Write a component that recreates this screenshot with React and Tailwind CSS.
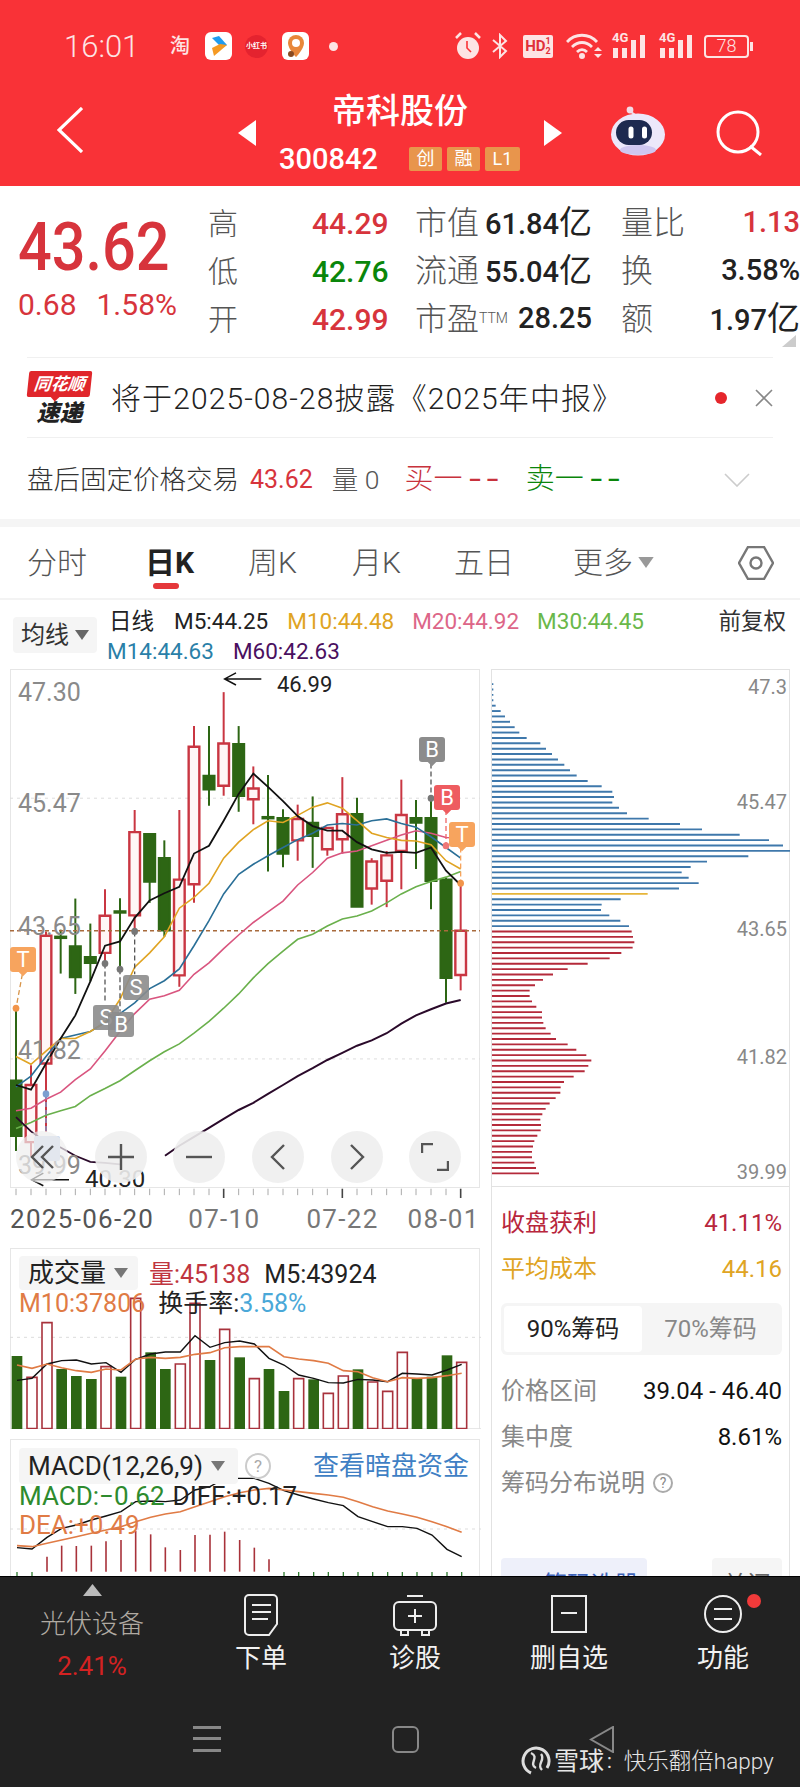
import React from "react";

const P = (a) => a.map((p) => p.join(",")).join(" ");
const xs = [48, 93, 138, 182, 226, 271, 315, 360, 404, 449, 493, 538, 582, 627, 671, 716, 760, 804, 849, 893, 938, 982, 1027, 1071, 1115, 1160, 1204, 1248, 1293, 1338, 1382];
const line = (ys) => ys.map((y, i) => [xs[i], y]);
const NS = { vectorEffect: "non-scaling-stroke" };

const candles = [
  [975, 1178, 1332, 1375, 1], [1135, 1190, 1350, 1390, 0], [760, 772, 1130, 1320, 0], [755, 775, 778, 878, 1],
  [668, 802, 888, 935, 1], [738, 832, 848, 900, 1], [642, 716, 820, 850, 0], [667, 704, 707, 870, 1],
  [420, 482, 715, 760, 0], [488, 488, 620, 680, 1], [505, 555, 757, 775, 1], [420, 615, 883, 915, 0],
  [185, 243, 628, 680, 0], [185, 325, 362, 408, 1], [90, 234, 352, 380, 0], [185, 236, 380, 425, 1],
  [298, 360, 390, 460, 0], [322, 440, 443, 592, 1], [418, 443, 542, 580, 1], [405, 445, 505, 562, 0],
  [382, 456, 492, 582, 1], [470, 470, 530, 548, 0], [328, 432, 502, 542, 0], [386, 432, 690, 690, 1],
  [555, 564, 640, 685, 0], [535, 547, 618, 692, 0], [335, 434, 535, 642, 0], [392, 443, 455, 585, 1],
  [385, 443, 618, 698, 1], [610, 615, 890, 960, 1], [625, 758, 882, 925, 0],
];
const m5 = [1190, 1203, 1130, 1060, 995, 900, 800, 788, 722, 673, 653, 635, 542, 520, 450, 375, 318, 355, 395, 437, 465, 478, 478, 510, 530, 540, 537, 540, 525, 590, 630];
const m10 = [1110, 1132, 1095, 1060, 1060, 1040, 1015, 950, 860, 820, 775, 695, 665, 625, 555, 510, 475, 450, 455, 435, 412, 400, 415, 450, 485, 497, 505, 507, 517, 562, 585];
const m14 = [1195, 1165, 1110, 1060, 1050, 1040, 1015, 990, 960, 920, 898, 865, 800, 730, 655, 600, 572, 548, 525, 503, 485, 462, 458, 462, 450, 445, 458, 468, 495, 525, 555];
const m20 = [1262, 1255, 1230, 1210, 1175, 1145, 1095, 1040, 990, 950, 940, 925, 880, 848, 808, 770, 735, 705, 675, 630, 595, 555, 540, 535, 520, 505, 490, 478, 485, 497, 498];
const m30 = [1312, 1295, 1275, 1262, 1250, 1220, 1200, 1178, 1150, 1122, 1097, 1075, 1045, 1012, 975, 935, 890, 850, 815, 782, 768, 745, 725, 717, 703, 680, 655, 635, 620, 608, 592];
const m60 = [[48, 1280], [93, 1320], [138, 1350], [182, 1365], [226, 1388], [271, 1405], [315, 1408], [360, 1412]];
const m60b = [[495, 1388], [538, 1360], [582, 1335], [627, 1310], [671, 1285], [716, 1260], [760, 1240], [804, 1215], [849, 1190], [893, 1165], [938, 1143], [982, 1120], [1027, 1100], [1071, 1080], [1115, 1065], [1160, 1045], [1204, 1018], [1248, 995], [1293, 978], [1338, 962], [1382, 952]];

const volBars = [[468, 1], [532, 0], [368, 0], [507, 1], [528, 1], [537, 1], [500, 0], [530, 1], [295, 0], [457, 1], [507, 1], [492, 0], [310, 0], [480, 1], [388, 0], [472, 1], [536, 0], [507, 1], [573, 1], [536, 0], [538, 1], [580, 0], [528, 0], [508, 1], [546, 0], [574, 0], [457, 0], [537, 1], [530, 1], [466, 1], [487, 0]];
const volK = [541, 535, 492, 482, 480, 492, 488, 517, 478, 462, 456, 456, 407, 442, 428, 423, 432, 475, 495, 525, 535, 548, 549, 538, 540, 545, 520, 522, 525, 510, 493];
const volO = [495, 505, 492, 503, 512, 517, 507, 510, 477, 472, 475, 472, 463, 458, 443, 440, 440, 440, 470, 477, 482, 490, 512, 515, 533, 545, 533, 535, 533, 527, 520];
const macdK = [1043, 1047, 1012, 985, 975, 960, 948, 935, 905, 903, 905, 900, 870, 860, 835, 835, 835, 850, 872, 885, 897, 908, 917, 950, 965, 980, 980, 985, 1005, 1048, 1070];
const macdO = [1037, 1040, 1030, 1020, 1010, 1000, 990, 980, 965, 952, 942, 935, 920, 905, 890, 878, 870, 865, 870, 875, 880, 885, 892, 905, 920, 933, 942, 952, 965, 980, 997];
const macdBars = [0, 0, 1070, 1037, 1038, 1037, 1024, 1020, 993, 1003, 1042, 1050, 1005, 1004, 995, 1020, 1043, 1078];

const profile = [40, 40, 40, 40, 47, 62, 75, 90, 104, 118, 140, 181, 198, 216, 234, 253, 270, 290, 323, 365, 397, 402, 397, 417, 441, 506, 600, 666, 779, 867, 909, 930, 805, 681, 632, 605, 626, 656, 597, 503, 422, 365, 363, 388, 421, 447, 455, 459, 463, 458, 424, 389, 323, 263, 219, 189, 165, 149, 149, 156, 169, 186, 186, 190, 197, 212, 228, 263, 289, 319, 334, 325, 314, 281, 252, 242, 241, 227, 209, 197, 187, 181, 183, 182, 172, 163, 159, 156, 156, 163, 168, 177];

function Down({ c = "#777", w = 14, h = 10 }) {
  return (
    <svg width={w} height={h} viewBox="0 0 14 10" className="shrink-0">
      <path d="M0 0H14L7 10Z" fill={c} />
    </svg>
  );
}

function Yi() {
  return <span className="text-[33px] font-normal">亿</span>;
}

function StatRow({ label, val, vc, l2, v2, l3, v3, v3c = "text-[#222]" }) {
  return (
    <div className="flex items-center h-12">
      <div className="w-[104px] text-[30px] font-light text-[#555]">{label}</div>
      <div className={`w-[74px] text-right text-[30px] font-medium ${vc}`}>{val}</div>
      <div className="ml-[29px] w-[177px] flex justify-between items-center">
        <div className="text-[32px] font-light text-[#555] whitespace-nowrap">{l2}</div>
        <div className="text-[29px] font-medium text-[#222] whitespace-nowrap">{v2}</div>
      </div>
      <div className="ml-[29px] w-[72px] text-[32px] font-light text-[#555] whitespace-nowrap">{l3}</div>
      <div className={`w-[107px] text-right text-[29px] font-medium whitespace-nowrap ${v3c}`}>{v3}</div>
    </div>
  );
}

function Marker({ t, pos, bg, tip }) {
  return (
    <div className={`absolute w-[26px] h-[25px] rounded-[3px] flex items-center justify-center text-[22px] leading-none text-[#fff] ${pos} ${bg}`}>
      {t}
      {tip ? <div className={`absolute -bottom-[3px] left-[10px] w-[6px] h-[6px] rotate-45 ${bg}`} /> : null}
    </div>
  );
}

function PriceChart() {
  return (
    <div className="relative h-[519px] border border-[#e6e6e6]">
      <svg width="470" height="519" viewBox="30 25.2 1410 1453.2" preserveAspectRatio="none" className="absolute -left-px -top-px">
        <line x1="30" x2="1440" y1="387" y2="387" stroke="#ddd" strokeDasharray="3 4" {...NS} />
        <line x1="30" x2="1440" y1="1117" y2="1117" stroke="#ddd" strokeDasharray="3 4" {...NS} />
        {candles.map((c, i) => {
          const col = c[4] ? "#2d6614" : "#c93642";
          return (
            <g key={i}>
              <line x1={xs[i]} x2={xs[i]} y1={c[0]} y2={c[3]} stroke={col} strokeWidth="2" {...NS} />
              <rect x={xs[i] - 16} y={c[1]} width="32" height={c[2] - c[1]} fill={c[4] ? col : "#fff6f6"} stroke={col} strokeWidth="2.4" {...NS} />
            </g>
          );
        })}
        <line x1="30" x2="1440" y1="758" y2="758" stroke="#a86a3c" strokeDasharray="4 3" strokeWidth="1.4" {...NS} />
        <polyline points={P(line(m30))} fill="none" stroke="#6ab04c" strokeWidth="1.6" {...NS} />
        <polyline points={P(line(m20))} fill="none" stroke="#d9557f" strokeWidth="1.6" {...NS} />
        <polyline points={P(line(m14))} fill="none" stroke="#2a6f97" strokeWidth="1.6" {...NS} />
        <polyline points={P(line(m10))} fill="none" stroke="#e0a423" strokeWidth="1.6" {...NS} />
        <polyline points={P(line(m5))} fill="none" stroke="#111" strokeWidth="1.8" {...NS} />
        <polyline points={P(m60)} fill="none" stroke="#2a0a2a" strokeWidth="1.8" {...NS} />
        <polyline points={P(m60b)} fill="none" stroke="#2a0a2a" strokeWidth="2" {...NS} />
        {/* high / low arrows */}
        <path d="M784 53H674M708 36L674 53L708 70" fill="none" stroke="#111" strokeWidth="1.5" {...NS} />
        <path d="M207 1455H95M130 1437L95 1455L130 1472" fill="none" stroke="#111" strokeWidth="1.5" {...NS} />
        {/* marker stems */}
        <g stroke="#555" strokeWidth="1.3" strokeDasharray="5 3" fill="none">
          <line x1="315" x2="315" y1="850" y2="960" {...NS} />
          <line x1="360" x2="360" y1="866" y2="985" {...NS} />
          <line x1="404" x2="404" y1="760" y2="880" {...NS} />
          <line x1="1293" x2="1293" y1="290" y2="385" {...NS} />
        </g>
        <line x1="1338" x2="1338" y1="420" y2="520" stroke="#ee6666" strokeWidth="1.3" strokeDasharray="5 3" {...NS} />
        <line x1="1382" x2="1382" y1="525" y2="625" stroke="#f7a35c" strokeWidth="1.3" strokeDasharray="5 3" {...NS} />
        <line x1="67" x2="48" y1="880" y2="975" stroke="#d8954a" strokeWidth="1.3" strokeDasharray="5 3" {...NS} />
        <line x1="138" x2="138" y1="1215" y2="1325" stroke="#7c9fd0" strokeWidth="1.3" strokeDasharray="5 3" {...NS} />
        <ellipse cx="315" cy="850" rx="10" ry="10" fill="#777" />
        <ellipse cx="360" cy="866" rx="10" ry="10" fill="#777" />
        <ellipse cx="404" cy="760" rx="10" ry="10" fill="#777" />
        <ellipse cx="1293" cy="387" rx="10" ry="10" fill="#777" />
        <ellipse cx="1338" cy="520" rx="10" ry="10" fill="#ee7777" />
        <ellipse cx="1382" cy="625" rx="10" ry="10" fill="#f2954a" />
        <ellipse cx="48" cy="975" rx="10" ry="10" fill="#f2954a" />
        <ellipse cx="138" cy="1215" rx="10" ry="10" fill="#7c9fd0" />
      </svg>

      <div className="absolute left-[7px] top-[8px] text-[25px] leading-[30px] text-[#8a8a8a]">47.30</div>
      <div className="absolute left-[7px] top-[119px] text-[25px] leading-[30px] text-[#8a8a8a]">45.47</div>
      <div className="absolute left-[7px] top-[242px] text-[25px] leading-[30px] text-[#8a8a8a]">43.65</div>
      <div className="absolute left-[7px] top-[366px] text-[25px] leading-[30px] text-[#8a8a8a]">41.82</div>
      <div className="absolute left-[7px] top-[481px] text-[25px] leading-[30px] text-[#8a8a8a]">39.99</div>
      <div className="absolute left-[266px] top-[2px] text-[22px] leading-[26px] text-[#222]">46.99</div>
      <div className="absolute left-[74px] top-[495px] text-[24px] leading-[28px] text-[#222]">40.30</div>

      <Marker t="T" pos="-left-px top-[277px]" bg="bg-[#f7a45e]" tip />
      <Marker t="S" pos="left-[82px] top-[335px]" bg="bg-[#8c8c8c]/90" />
      <Marker t="S" pos="left-[112px] top-[305px]" bg="bg-[#8c8c8c]/90" />
      <Marker t="B" pos="left-[97px] top-[342px]" bg="bg-[#8c8c8c]/90" />
      <Marker t="B" pos="left-[408px] top-[67px]" bg="bg-[#8c8c8c]" tip />
      <Marker t="B" pos="left-[423px] top-[115px]" bg="bg-[#ee5c60]" tip />
      <Marker t="T" pos="left-[438px] top-[152px]" bg="bg-[#f7a45e]" tip />
      <div className="absolute left-[23px] top-[466px] w-[26px] h-[25px] rounded-[2px] bg-[#c9d8ef]" />

      <div className="absolute left-[5px] top-[461px] flex gap-[26.7px]">
        <div className="w-[52px] h-[52px] rounded-full bg-[#eeeeee]/70 flex items-center justify-center">
          <svg width="26" height="26" viewBox="0 0 26 26" fill="none" stroke="#555" strokeWidth="2.4"><path d="M14 2L3 13L14 24M24 2L13 13L24 24" /></svg>
        </div>
        <div className="w-[52px] h-[52px] rounded-full bg-[#eeeeee]/90 flex items-center justify-center">
          <svg width="26" height="26" viewBox="0 0 26 26" fill="none" stroke="#555" strokeWidth="2.4"><path d="M0 13H26M13 0V26" /></svg>
        </div>
        <div className="w-[52px] h-[52px] rounded-full bg-[#eeeeee]/90 flex items-center justify-center">
          <svg width="26" height="6" viewBox="0 0 26 6" fill="none" stroke="#555" strokeWidth="2.4"><path d="M0 3H26" /></svg>
        </div>
        <div className="w-[52px] h-[52px] rounded-full bg-[#eeeeee]/90 flex items-center justify-center">
          <svg width="16" height="26" viewBox="0 0 16 26" fill="none" stroke="#555" strokeWidth="2.4"><path d="M14 1L2 13L14 25" /></svg>
        </div>
        <div className="w-[52px] h-[52px] rounded-full bg-[#eeeeee]/90 flex items-center justify-center">
          <svg width="16" height="26" viewBox="0 0 16 26" fill="none" stroke="#555" strokeWidth="2.4"><path d="M2 1L14 13L2 25" /></svg>
        </div>
        <div className="w-[52px] h-[52px] rounded-full bg-[#eeeeee]/90 flex items-center justify-center">
          <svg width="28" height="28" viewBox="0 0 28 28" fill="none" stroke="#555" strokeWidth="2.4"><path d="M1 10V1H12M27 18V27H16" /></svg>
        </div>
      </div>
    </div>
  );
}

function VolumePanel() {
  return (
    <div className="relative h-[181px] border-t border-x border-[#e6e6e6]">
      <svg width="471" height="181" viewBox="27 144 1413 543" preserveAspectRatio="none" className="absolute -left-px -top-px">
        <line x1="27" x2="1440" y1="412" y2="412" stroke="#ddd" strokeDasharray="3 4" {...NS} />
        <line x1="27" x2="1440" y1="686" y2="686" stroke="#e3e3e3" {...NS} />
        {volBars.map((b, i) =>
          b[1] ? (
            <rect key={i} x={xs[i] - 16} y={b[0]} width="32" height={687 - b[0]} fill="#2d6614" />
          ) : (
            <rect key={i} x={xs[i] - 15} y={b[0]} width="30" height={686 - b[0]} fill="#fff" stroke="#a8323c" strokeWidth="1.6" {...NS} />
          )
        )}
        <polyline points={P(line(volK))} fill="none" stroke="#111" strokeWidth="1.4" {...NS} />
        <polyline points={P(line(volO))} fill="none" stroke="#e07b45" strokeWidth="1.6" {...NS} />
      </svg>
      <div className="absolute left-[8px] top-[7px] w-[119px] h-[34px] rounded-[4px] bg-[#f5f5f5] flex items-center pl-[9px] gap-[8px]">
        <span className="text-[26px] leading-none text-[#222]">成交量</span>
        <Down />
      </div>
      <div className="absolute left-[138px] top-[9px] flex items-center h-[34px] text-[25px] whitespace-nowrap">
        <span className="text-[#c0363f]">量:45138</span>
        <span className="ml-[14px] text-[#222]">M5:43924</span>
      </div>
      <div className="absolute left-[8px] top-[38px] flex items-center h-[34px] text-[25px] whitespace-nowrap">
        <span className="text-[#e07b45]">M10:37806</span>
        <span className="ml-[13px] text-[#222]">换手率:</span>
        <span className="text-[#4aa8d8]">3.58%</span>
      </div>
    </div>
  );
}

function MacdPanel() {
  return (
    <div className="relative h-[137px] mt-[10px] border-t border-x border-[#e6e6e6]">
      <svg width="471" height="137" viewBox="27 717 1413 411" preserveAspectRatio="none" className="absolute -left-px -top-px">
        <line x1="27" x2="1440" y1="987" y2="987" stroke="#ddd" strokeDasharray="3 4" {...NS} />
        {macdBars.map((y, i) => (y ? <line key={i} x1={xs[i]} x2={xs[i]} y1={y} y2="1115" stroke="#a8323a" strokeWidth="1.6" {...NS} /> : null))}
        {xs.map((x, i) => (i < 2 || i > 17 ? <line key={i} x1={x} x2={x} y1="1116" y2="1128" stroke="#2d7a2d" strokeWidth="1.3" {...NS} /> : null))}
        <polyline points={P(line(macdK))} fill="none" stroke="#111" strokeWidth="1.4" {...NS} />
        <polyline points={P(line(macdO))} fill="none" stroke="#e07b45" strokeWidth="1.6" {...NS} />
      </svg>
      <div className="absolute left-[8px] top-[8px] w-[219px] h-[36px] rounded-[4px] bg-[#f5f5f5] flex items-center pl-[9px] gap-[8px]">
        <span className="text-[26px] leading-none text-[#222] whitespace-nowrap">MACD(12,26,9)</span>
        <Down />
      </div>
      <div className="absolute left-[234px] top-[13px] w-[26px] h-[26px] rounded-full border-2 border-[#ccc] flex items-center justify-center text-[17px] leading-none text-[#aaa]">?</div>
      <div className="absolute left-[302px] top-[9px] h-[34px] flex items-center text-[26px] text-[#3f7fc4] whitespace-nowrap">查看暗盘资金</div>
      <div className="absolute left-[8px] top-[39px] h-[34px] flex items-center text-[26px] whitespace-nowrap">
        <span className="text-[#2e8b2e]">MACD:−0.62</span>
        <span className="ml-[8px] text-[#222]">DIFF:+0.17</span>
      </div>
      <div className="absolute left-[8px] top-[68px] h-[34px] flex items-center text-[26px] text-[#e07b45] whitespace-nowrap">DEA:+0.49</div>
    </div>
  );
}

function ProfileChart() {
  return (
    <div className="relative h-[518px] shrink-0 border border-[#e2e2e2]">
      <svg width="299" height="518" viewBox="33 26 897 1503" preserveAspectRatio="none" className="absolute -left-px -top-px">
        {profile.map((e, i) => {
          const y = 70 + i * 15.6;
          const c = i === 39 ? "#e6b53a" : i >= 46 ? "#b42a3a" : "#3f78ab";
          return <line key={i} x1="36" x2={e} y1={y} y2={y} stroke={c} strokeWidth="1.9" {...NS} />;
        })}
      </svg>
      <div className="absolute right-[2px] top-[5px] text-[20px] leading-[24px] text-[#888]">47.3</div>
      <div className="absolute right-[2px] top-[120px] text-[20px] leading-[24px] text-[#888]">45.47</div>
      <div className="absolute right-[2px] top-[247px] text-[20px] leading-[24px] text-[#888]">43.65</div>
      <div className="absolute right-[2px] top-[375px] text-[20px] leading-[24px] text-[#888]">41.82</div>
      <div className="absolute right-[2px] top-[490px] text-[20px] leading-[24px] text-[#888]">39.99</div>
    </div>
  );
}

function RightInfo() {
  return (
    <div className="flex-1 border-x border-[#e2e2e2] pl-[9px] pr-[7px] pt-[13px]">
      <div className="h-[46px] flex items-center justify-between text-[24px]">
        <span className="text-[#b8263c]">收盘获利</span>
        <span className="text-[#b8263c]">41.11%</span>
      </div>
      <div className="h-[46px] flex items-center justify-between text-[24px]">
        <span className="text-[#e0a423]">平均成本</span>
        <span className="text-[#e0a423]">44.16</span>
      </div>
      <div className="mt-[11px] h-[52px] rounded-[6px] bg-[#f5f5f5] flex p-[3px] text-[24px]">
        <div className="w-[138px] rounded-[4px] bg-[#fff] flex items-center justify-center text-[#222]">90%筹码</div>
        <div className="flex-1 flex items-center justify-center text-[#888]">70%筹码</div>
      </div>
      <div className="mt-[13px] h-[46px] flex items-center justify-between text-[24px]">
        <span className="text-[#888]">价格区间</span>
        <span className="text-[#111]">39.04 - 46.40</span>
      </div>
      <div className="h-[46px] flex items-center justify-between text-[24px]">
        <span className="text-[#888]">集中度</span>
        <span className="text-[#111]">8.61%</span>
      </div>
      <div className="h-[46px] flex items-center text-[24px] text-[#888]">
        筹码分布说明
        <span className="ml-[8px] w-[20px] h-[20px] rounded-full border-2 border-[#aaa] flex items-center justify-center text-[14px] leading-none">?</span>
      </div>
      <div className="mt-[52px] flex justify-between">
        <div className="w-[146px] h-[54px] rounded-[4px] bg-[#eef0fa] flex items-center pl-[8px] gap-[16px] text-[#3f63b8] text-[24px]">
          <svg width="18" height="16" viewBox="0 0 18 16" fill="#3f63b8"><rect width="18" height="3" /><rect y="6" width="12" height="3" /><rect y="12" width="16" height="3" /></svg>
          筹码选股
        </div>
        <div className="w-[70px] h-[54px] rounded-[4px] bg-[#f5f5f5] flex items-center justify-center text-[#666] text-[24px]">关闭</div>
      </div>
    </div>
  );
}

function Signal({ cls }) {
  return (
    <div className={`relative w-[33px] h-[24px] ${cls}`}>
      <span className="absolute left-0 -top-[3px] text-[13px] font-bold leading-[14px] text-[#fde4e4]">4G</span>
      <svg width="33" height="24" viewBox="0 0 33 24" fill="#fde4e4" className="absolute left-0 top-0">
        <rect x="1" y="14" width="5" height="10" /><rect x="10" y="14" width="5" height="10" /><rect x="19" y="6" width="5" height="18" /><rect x="28" y="1" width="5" height="23" />
      </svg>
    </div>
  );
}

function Status() {
  return (
    <div className="h-[92px] flex items-center text-[#fde4e4]">
      <div className="ml-[64px] w-[106px] text-[31px] font-light leading-none">16:01</div>
      <div className="w-[35px] text-[20px] font-medium leading-none">淘</div>
      <div className="w-[27px] h-[28px] rounded-[6px] bg-[#fff] flex items-center justify-center">
        <svg width="20" height="22" viewBox="0 0 20 22"><path d="M3 3L10 1L18 10L13 13Z" fill="#1f9cf0" /><path d="M18 10L5 21L3 13L11 9Z" fill="#f59a23" /></svg>
      </div>
      <div className="ml-[13px] w-[23px] h-[23px] rounded-full bg-[#e4232f] flex items-center justify-center text-[7px] font-bold leading-none text-[#fff] whitespace-nowrap">小红书</div>
      <div className="ml-[14px] w-[27px] h-[28px] rounded-[6px] bg-[#fff] flex items-center justify-center">
        <svg width="20" height="24" viewBox="0 0 20 24"><path d="M10 1a8 8 0 0 1 8 8c0 6-8 14-8 14S2 15 2 9a8 8 0 0 1 8-8Z" fill="#e8873a" /><circle cx="10" cy="9" r="4" fill="#fff" /><circle cx="5" cy="20" r="3" fill="#8a4a20" /></svg>
      </div>
      <div className="ml-[20px] w-[9px] h-[9px] rounded-full bg-[#fde4e4]" />
      <svg width="26" height="28" viewBox="0 0 26 28" className="ml-[117px]">
        <circle cx="13" cy="16" r="11" fill="#fde4e4" />
        <path d="M1 6L6 1M25 6L20 1" stroke="#fde4e4" strokeWidth="2.5" />
        <path d="M12 9V16L16 20" stroke="#f93236" strokeWidth="1.6" fill="none" />
      </svg>
      <svg width="16" height="26" viewBox="0 0 16 26" className="ml-[11px]" fill="none" stroke="#fde4e4" strokeWidth="2">
        <path d="M1 7L14 18L8 24V2L14 8L1 19" />
      </svg>
      <div className="ml-[15px] w-[30px] h-[23px] rounded-[2px] bg-[#fde4e4] flex items-center justify-center text-[#e0303a] font-bold leading-none">
        <span className="text-[15px]">HD</span>
        <span className="flex flex-col items-center text-[9px] leading-[10px]"><span>1</span><span>2</span></span>
      </div>
      <svg width="36" height="26" viewBox="0 0 36 26" className="ml-[13px]" fill="none" stroke="#fde4e4" strokeWidth="2.8">
        <path d="M1 9C9 0 23 0 31 9M6 14C12 8 20 8 26 14M11 19C14 16 18 16 21 19" />
        <circle cx="16" cy="23" r="1.6" fill="#fde4e4" />
        <path d="M28 18H36L32 14ZM28 21H36L32 25Z" fill="#fde4e4" stroke="none" />
      </svg>
      <Signal cls="ml-[10px]" />
      <Signal cls="ml-[14px]" />
      <div className="ml-[12px] w-[45px] h-[23px] rounded-[4px] border-2 border-[#fde4e4] flex items-center justify-center text-[18px] font-light leading-none">78</div>
      <div className="ml-[1px] w-[3px] h-[9px] bg-[#fde4e4]" />
    </div>
  );
}

function NavBar() {
  return (
    <div className="h-[94px] flex items-start">
      <svg width="26" height="46" viewBox="0 0 26 46" className="ml-[57px] mt-[15px]" fill="none" stroke="#fff" strokeWidth="3.2"><path d="M25 1L2 23L25 45" /></svg>
      <svg width="18" height="26" viewBox="0 0 18 26" className="ml-[155px] mt-[28px]"><path d="M18 0V26L0 13Z" fill="#fff" /></svg>
      <div className="w-[288px] flex flex-col items-center">
        <div className="h-[38px] flex items-center text-[34px] font-medium leading-none text-[#fff]">帝科股份</div>
        <div className="mt-[17px] w-full h-[24px] pl-[23px] flex items-center">
          <div className="w-[96px] text-[29px] font-medium leading-none text-[#fff]">300842</div>
          <div className="ml-[34px] flex gap-[5px] text-[18px] leading-none text-[#fff]">
            <div className="w-[33px] h-[24px] rounded-[2px] bg-[#e8954c] flex items-center justify-center">创</div>
            <div className="w-[33px] h-[24px] rounded-[2px] bg-[#e8954c] flex items-center justify-center">融</div>
            <div className="w-[35px] h-[24px] rounded-[2px] bg-[#e8954c] flex items-center justify-center">L1</div>
          </div>
        </div>
      </div>
      <svg width="18" height="26" viewBox="0 0 18 26" className="mt-[28px]"><path d="M0 0V26L18 13Z" fill="#fff" /></svg>
      <svg width="56" height="50" viewBox="0 0 56 50" className="ml-[48px] mt-[14px]">
        <path d="M21 6L27 10" stroke="#f2dce8" strokeWidth="2" />
        <circle cx="20" cy="4" r="3.4" fill="#f2dce8" />
        <ellipse cx="28" cy="28.5" rx="27" ry="21" fill="#ece8fa" />
        <ellipse cx="28" cy="44" rx="18" ry="5" fill="#cfc7f0" />
        <rect x="6" y="14" width="36" height="25" rx="12.5" fill="#1d2a50" />
        <rect x="18.5" y="20.5" width="5" height="12" rx="2.5" fill="#fff" />
        <rect x="32" y="20.5" width="5" height="12" rx="2.5" fill="#fff" />
      </svg>
      <svg width="46" height="46" viewBox="0 0 46 46" className="ml-[50px] mt-[18px]" fill="none" stroke="#fff" strokeWidth="3">
        <circle cx="22" cy="22" r="20" />
        <path d="M34 36L45 45" />
      </svg>
    </div>
  );
}

function Tabs() {
  return (
    <div className="h-[73px] border-b-2 border-[#f3f3f3] flex items-center text-[30px] font-light text-[#555]">
      <div className="ml-[27px]">分时</div>
      <div className="relative ml-[58px] font-bold text-[#222]">
        日K
        <div className="absolute left-[8px] top-[43px] w-[26px] h-[6px] rounded-full bg-[#e5383b]" />
      </div>
      <div className="ml-[54px]">周K</div>
      <div className="ml-[55px]">月K</div>
      <div className="ml-[53px]">五日</div>
      <div className="ml-[59px]">更多</div>
      <div className="ml-[5px]"><Down c="#999" w="16" h="11" /></div>
      <svg width="36" height="34" viewBox="0 0 36 34" className="ml-[84px]" fill="none" stroke="#777" strokeWidth="2.4">
        <path d="M10 1H26L35 17L26 33H10L1 17Z" />
        <circle cx="18" cy="17" r="5.5" />
      </svg>
    </div>
  );
}

function BottomBar() {
  const col = "w-[154px] flex flex-col items-center pt-[17px]";
  const lbl = "text-[26px] leading-[34px] text-[#f2f2f2] mt-[5px]";
  return (
    <div className="relative h-[211px] shrink-0 bg-[#222222] border-t border-[#000]">
      <div className="h-[120px] flex">
        <div className="w-[184px] flex flex-col items-center pt-[7px]">
          <svg width="19" height="12" viewBox="0 0 19 12"><path d="M0 12L9.5 0L19 12Z" fill="#bbb" /></svg>
          <div className="mt-[9px] text-[26px] leading-[38px] font-light text-[#b0aaa2]">光伏设备</div>
          <div className="mt-[6px] text-[26px] leading-[34px] text-[#d42222]">2.41%</div>
        </div>
        <div className={col}>
          <svg width="36" height="42" viewBox="0 0 36 42" fill="none" stroke="#eee" strokeWidth="2">
            <path d="M6 1H30a4 4 0 0 1 4 4V30L26 41H6a4 4 0 0 1-4-4V5a4 4 0 0 1 4-4Z" />
            <path d="M9 11H28M9 18H28M9 25H25" />
          </svg>
          <div className={lbl}>下单</div>
        </div>
        <div className={col}>
          <svg width="44" height="42" viewBox="0 0 44 42" fill="none" stroke="#eee" strokeWidth="2">
            <path d="M14 2H30" />
            <rect x="1" y="8" width="42" height="28" rx="5" />
            <path d="M8 36V41H15V36M29 36V41H36V36" />
            <path d="M22 15V29M15 22H29" />
          </svg>
          <div className={lbl}>诊股</div>
        </div>
        <div className={col}>
          <svg width="36" height="42" viewBox="0 0 36 42" fill="none" stroke="#eee" strokeWidth="2">
            <rect x="1" y="2" width="34" height="36" />
            <path d="M10 19H26" />
          </svg>
          <div className={lbl}>删自选</div>
        </div>
        <div className={`${col} relative`}>
          <svg width="38" height="42" viewBox="0 0 38 42" fill="none" stroke="#eee" strokeWidth="2">
            <circle cx="19" cy="20" r="18" />
            <path d="M10 15H28M10 25H28" />
          </svg>
          <div className={lbl}>功能</div>
          <div className="absolute left-[101px] top-[17px] w-[14px] h-[14px] rounded-full bg-[#f03a3a]" />
        </div>
      </div>
      <div className="mt-[28px] flex items-center">
        <svg width="28" height="28" viewBox="0 0 28 28" className="ml-[193px]" fill="#888"><rect y="1" width="28" height="3" /><rect y="12" width="28" height="3" /><rect y="24" width="28" height="3" /></svg>
        <div className="ml-[171px] w-[27px] h-[27px] rounded-[6px] border-2 border-[#888]" />
        <svg width="26" height="27" viewBox="0 0 26 27" className="ml-[170px]" fill="none" stroke="#888" strokeWidth="2"><path d="M24 1V26L2 13.5Z" /></svg>
      </div>
      <div className="absolute left-[520px] top-[169px] flex items-center h-[30px] text-[#e6e6e6]">
        <svg width="32" height="30" viewBox="0 0 32 30" fill="none" stroke="#ddd" strokeWidth="3">
          <path d="M27 22A13 13 0 1 0 11 27" />
          <path d="M11 7C20 11 8 18 16 22M21 8C26 14 16 18 22 24" strokeWidth="2.4" />
        </svg>
        <span className="ml-[2px] text-[25px] leading-none whitespace-nowrap">雪球</span>
        <span className="ml-[3px] text-[20px] leading-none">:</span>
        <span className="ml-[12px] text-[22.5px] font-light leading-none whitespace-nowrap">快乐翻倍happy</span>
      </div>
    </div>
  );
}

export default function App() {
  return (
    <div className="relative w-[800px] h-[1787px] overflow-hidden bg-[#fff] flex flex-col font-['Roboto','Noto_Sans_CJK_SC',sans-serif]">
      <div className="h-[186px] shrink-0 bg-[#f93237]">
        <Status />
        <NavBar />
      </div>

      {/* quote */}
      <div className="relative h-[171px] shrink-0 flex pt-[13px]">
        <div className="w-[208px] pl-[18px]">
          <div className="mt-[19px] text-[66px] leading-[60px] font-medium text-[#d7343c] origin-left scale-x-[0.9] whitespace-nowrap">43.62</div>
          <div className="mt-[10px] flex text-[30px] leading-[34px] text-[#d7343c]">
            <span>0.68</span>
            <span className="ml-[20px]">1.58%</span>
          </div>
        </div>
        <div>
          <StatRow label="高" val="44.29" vc="text-[#d7343c]" l2="市值" v2={<>61.84<Yi /></>} l3="量比" v3="1.13" v3c="text-[#d7343c]" />
          <StatRow label="低" val="42.76" vc="text-[#0a860a]" l2="流通" v2={<>55.04<Yi /></>} l3="换" v3="3.58%" />
          <StatRow label="开" val="42.99" vc="text-[#d7343c]" l2={<span>市盈<sup className="text-[14px]">TTM</sup></span>} v2="28.25" l3="额" v3={<>1.97<Yi /></>} />
        </div>
        <svg width="14" height="12" viewBox="0 0 14 12" className="absolute right-[4px] bottom-[10px]"><path d="M14 0V12H0Z" fill="#ccc" /></svg>
      </div>

      {/* news */}
      <div className="mx-[27px] h-[81px] shrink-0 border-y border-[#f0f0f0] flex items-center">
        <div className="w-[65px] flex flex-col items-center">
          <div className="relative w-[63px] h-[26px] -skew-x-6 rounded-[2px] bg-[#e0262b] flex items-center justify-center text-[17px] font-bold italic leading-none text-[#fff]">
            同花顺
            <div className="absolute -bottom-[3px] left-[25px] w-[7px] h-[7px] rotate-45 bg-[#e0262b]" />
          </div>
          <div className="mt-[5px] text-[23px] font-black italic leading-none text-[#222]">速递</div>
        </div>
        <div className="ml-[19px] mt-[2px] text-[30px] font-light tracking-[1.1px] text-[#222] whitespace-nowrap">将于2025-08-28披露《2025年中报》</div>
        <div className="ml-auto w-[12px] h-[12px] rounded-full bg-[#e5262c]" />
        <svg width="18" height="18" viewBox="0 0 18 18" className="ml-[28px]" fill="none" stroke="#888" strokeWidth="1.6"><path d="M1 1L17 17M17 1L1 17" /></svg>
      </div>

      {/* after hours */}
      <div className="h-[81px] shrink-0 pt-[3px] flex items-center text-[26.5px] font-light whitespace-nowrap">
        <span className="ml-[27px] text-[#333]">盘后固定价格交易</span>
        <span className="ml-[11px] text-[25px] font-normal text-[#d7343c]">43.62</span>
        <span className="ml-[19px] text-[#555]">量 0</span>
        <span className="ml-[25px] text-[29px] text-[#c8323c]">买一</span>
        <span className="ml-[6px] text-[20px] font-bold text-[#c8323c]">– –</span>
        <span className="ml-[27px] text-[29px] text-[#0a860a]">卖一</span>
        <span className="ml-[6px] text-[20px] font-bold text-[#0a860a]">– –</span>
        <svg width="26" height="14" viewBox="0 0 26 14" className="ml-auto mr-[50px]" fill="none" stroke="#ccc" strokeWidth="1.6"><path d="M1 1L13 13L25 1" /></svg>
      </div>
      <div className="h-[8px] shrink-0 bg-[#f5f5f5]" />

      <Tabs />

      {/* indicator legend */}
      <div className="h-[69px] shrink-0 flex">
        <div className="ml-[13px] mt-[17px] w-[84px] h-[36px] rounded-[4px] bg-[#f5f5f5] flex items-center pl-[8px] gap-[6px]">
          <span className="text-[24px] leading-none text-[#333]">均线</span>
          <Down c="#666" />
        </div>
        <div className="ml-[12px] flex-1 pt-[7px] text-[22.5px] whitespace-nowrap">
          <div className="h-[30px] flex items-center">
            <span className="text-[#222]">日线</span>
            <span className="ml-[20px] text-[#222]">M5:44.25</span>
            <span className="ml-[19px] text-[#e0a423]">M10:44.48</span>
            <span className="ml-[18px] text-[#dd6688]">M20:44.92</span>
            <span className="ml-[18px] text-[#6ab84a]">M30:44.45</span>
            <span className="ml-auto mr-[14px] text-[#333]">前复权</span>
          </div>
          <div className="h-[30px] flex items-center -ml-[2px]">
            <span className="text-[#2a7fa8]">M14:44.63</span>
            <span className="ml-[19px] text-[#4a1060]">M60:42.63</span>
          </div>
        </div>
      </div>

      {/* charts */}
      <div className="flex-1 min-h-0 overflow-hidden flex">
        <div className="ml-[10px] w-[470px]">
          <PriceChart />
          <svg width="470" height="10" viewBox="30 1478 1410 28" preserveAspectRatio="none" className="block">
            {xs.map((x, i) => {
              const major = x === 671 || x === 1027 || x === 1382;
              return <line key={i} x1={x} x2={x} y1="1480" y2={major ? 1506 : 1498} stroke={major ? "#444" : "#aaa"} strokeWidth={major ? 1.6 : 1} {...NS} />;
            })}
          </svg>
          <div className="h-[50px] flex items-center pb-[8px] text-[26px] tracking-[1.3px] text-[#777] whitespace-nowrap">
            <span className="text-[#555]">2025-06-20</span>
            <span className="ml-[34px]">07-10</span>
            <span className="ml-[46px]">07-22</span>
            <span className="ml-[29px]">08-01</span>
          </div>
          <VolumePanel />
          <MacdPanel />
        </div>
        <div className="ml-[11px] w-[299px] flex flex-col">
          <ProfileChart />
          <RightInfo />
        </div>
      </div>

      <BottomBar />
    </div>
  );
}
